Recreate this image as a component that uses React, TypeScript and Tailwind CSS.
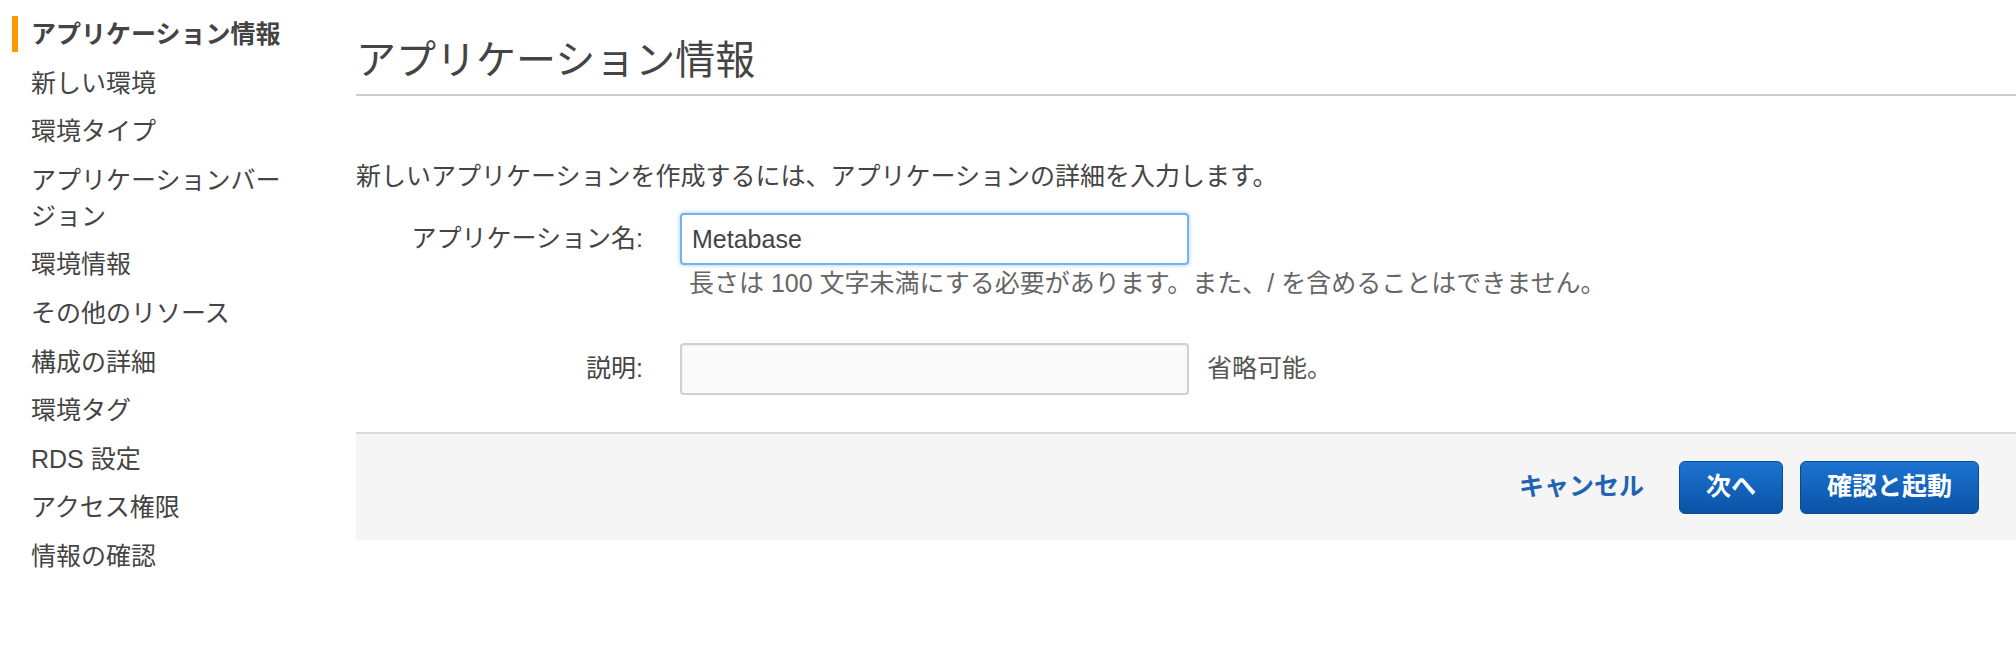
const navItems = [
  "新しい環境",
  "環境タイプ",
  "アプリケーションバージョン",
  "環境情報",
  "その他のリソース",
  "構成の詳細",
  "環境タグ",
  "RDS 設定",
  "アクセス権限",
  "情報の確認",
];

function Sidebar() {
  return (
    <nav className="w-[356px] shrink-0 pt-4 flex flex-col gap-[12.6px] text-[25px] leading-[36px] text-[#444]">
      <div className="ml-3 w-[288px] border-l-[6px] border-[#f90] pl-[13px] font-bold">
        アプリケーション情報
      </div>
      {navItems.map((item) => (
        <div key={item} className="w-[300px] pl-[31px]">
          {item}
        </div>
      ))}
    </nav>
  );
}

export default function App() {
  return (
    <div className="flex min-h-[668px] bg-white font-['Liberation_Sans','Noto_Sans_CJK_JP',sans-serif] text-[#444]">
      <Sidebar />

      <main className="flex-1 min-w-0">
        <h1 className="pt-9 pb-[10px] text-[40px] leading-[48px] font-normal border-b-2 border-[#ccc]">
          アプリケーション情報
        </h1>

        <p className="mt-[62px] text-[25px] leading-[36px]">
          新しいアプリケーションを作成するには、アプリケーションの詳細を入力します。
        </p>

        <div className="mt-[19px] flex items-start gap-[37px]">
          <label className="w-[287px] h-[52px] flex items-center justify-end text-[25px]">
            アプリケーション名:
          </label>
          <div className="flex flex-col">
            <input
              defaultValue="Metabase"
              className="w-[509px] h-[52px] px-[10px] rounded-[4px] border-2 border-[#74b3ec] bg-white text-[25px] text-[#444] outline-none shadow-[0_0_4px_rgba(90,160,235,0.6)]"
            />
            <p className="pl-[9px] text-[25px] leading-[36px] text-[#666] whitespace-nowrap">
              長さは 100 文字未満にする必要があります。また、/ を含めることはできません。
            </p>
          </div>
        </div>

        <div className="mt-[42px] flex items-center gap-[37px]">
          <label className="w-[287px] text-right text-[25px]">説明:</label>
          <input className="w-[509px] h-[52px] px-[10px] rounded-[4px] border-2 border-[#d0d0d0] bg-[#fafafa] text-[25px] outline-none shadow-[inset_0_1px_2px_rgba(0,0,0,0.05)]" />
          <span className="-ml-[19px] text-[25px] text-[#555]">省略可能。</span>
        </div>

        <div className="mt-[37px] h-[108px] border-t-2 border-[#ddd] bg-[#f5f5f5] flex items-center justify-end pr-[37px]">
          <button className="mr-[35px] text-[25px] font-bold text-[#1e63b4]">
            キャンセル
          </button>
          <button className="h-[53px] w-[104px] rounded-[6px] border border-[#0a4a91] bg-gradient-to-b from-[#1c74d1] to-[#0a53a6] text-[25px] font-bold text-white">
            次へ
          </button>
          <button className="ml-[17px] h-[53px] w-[179px] rounded-[6px] border border-[#0a4a91] bg-gradient-to-b from-[#1c74d1] to-[#0a53a6] text-[25px] font-bold text-white">
            確認と起動
          </button>
        </div>
      </main>
    </div>
  );
}
